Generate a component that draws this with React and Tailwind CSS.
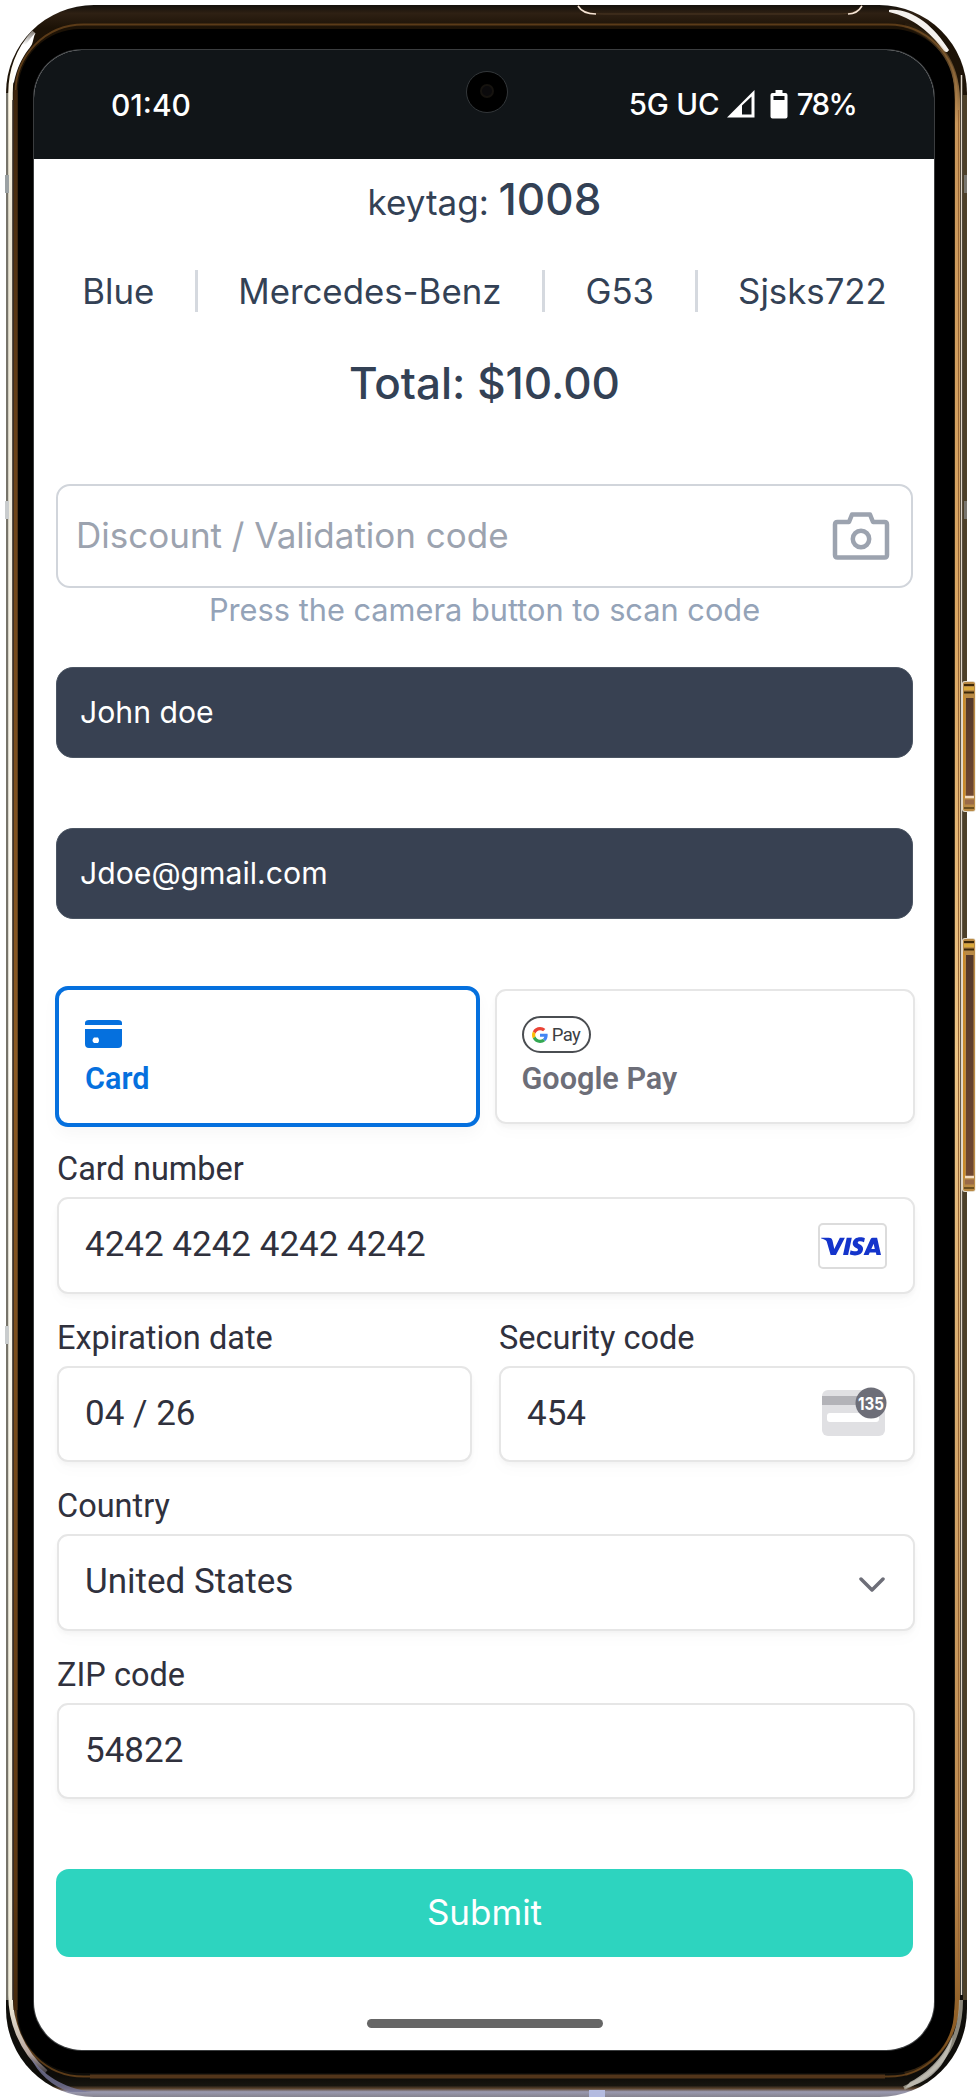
import React from "react";

const sans = "font-['Inter',sans-serif]";
const robo = "font-['Roboto',sans-serif]";

function SideButton({ y, h }) {
  return (
    <g transform={`translate(962 ${y})`}>
      <rect x="0" y="0" width="13.500" height={h} rx="3" fill="#e6dccb" />
      <rect x="1" y="1" width="12" height={h - 2} rx="2" fill="#b98a45" />
      <rect x="1" y="14" width="2" height={h - 28} fill="#c98a2a" />
      <rect x="4" y="17" width="7.500" height={h - 33} fill="url(#btn)" />
      <path d="M2 4H12M2 11.500H12" stroke="#3c2708" strokeWidth="2" />
      <path d="M2 7.500H12" stroke="#d9a93a" strokeWidth="3" />
      <path d={`M3 ${h - 15}H12`} stroke="#f3dcc0" strokeWidth="2.500" />
      <path d={`M3 ${h - 10}H12`} stroke="#9a6a48" strokeWidth="5" />
      <path d={`M2 ${h - 4}H12`} stroke="#6b4f20" strokeWidth="2" />
    </g>
  );
}

function PhoneFrame() {
  return (
    <svg className="absolute inset-0 pointer-events-none" width="978" height="2100" viewBox="0 0 978 2100" fill="none" aria-hidden="true">
      <defs>
        <linearGradient id="base" x1="0" y1="5" x2="0" y2="2097" gradientUnits="userSpaceOnUse">
          <stop offset="0" stopColor="#14100b" />
          <stop offset="0.004" stopColor="#2e2013" />
          <stop offset="0.011" stopColor="#1c1206" />
          <stop offset="0.5" stopColor="#3c2f1e" />
          <stop offset="0.99" stopColor="#0d0c09" />
          <stop offset="0.9945" stopColor="#17150f" />
          <stop offset="0.996" stopColor="#5d4630" />
          <stop offset="0.9975" stopColor="#9a99b0" />
          <stop offset="1" stopColor="#86838f" />
        </linearGradient>
        <linearGradient id="btn" x1="0" y1="0" x2="0" y2="1">
          <stop offset="0" stopColor="#53382a" />
          <stop offset="1" stopColor="#6f4731" />
        </linearGradient>
        <linearGradient id="fadeWhite" x1="0" y1="20" x2="0" y2="2085" gradientUnits="userSpaceOnUse">
          <stop offset="0" stopColor="#fff" stopOpacity="0" />
          <stop offset="0.012" stopColor="#fff" />
          <stop offset="0.04" stopColor="#fff8e6" />
          <stop offset="0.1" stopColor="#e8e3d2" />
          <stop offset="0.5" stopColor="#fdfbf3" />
          <stop offset="0.96" stopColor="#eeead8" />
          <stop offset="0.985" stopColor="#b8a69e" />
          <stop offset="1" stopColor="#8583a0" stopOpacity="0" />
        </linearGradient>
        <linearGradient id="fadeGold" x1="0" y1="20" x2="0" y2="2085" gradientUnits="userSpaceOnUse">
          <stop offset="0" stopColor="#b58b52" stopOpacity="0" />
          <stop offset="0.05" stopColor="#c8965a" />
          <stop offset="0.3" stopColor="#dba863" />
          <stop offset="0.5" stopColor="#edc585" />
          <stop offset="0.9" stopColor="#b9874d" />
          <stop offset="0.975" stopColor="#8a5a22" />
          <stop offset="1" stopColor="#8a5a22" stopOpacity="0" />
        </linearGradient>
        <linearGradient id="fadeBrown" x1="0" y1="60" x2="0" y2="2060" gradientUnits="userSpaceOnUse">
          <stop offset="0" stopColor="#3a220a" />
          <stop offset="0.2" stopColor="#6b4218" />
          <stop offset="0.5" stopColor="#8c5a22" />
          <stop offset="0.92" stopColor="#5b3610" />
          <stop offset="1" stopColor="#3a220a" />
        </linearGradient>
      </defs>
      <rect x="6" y="5" width="961" height="2092" rx="88" fill="url(#base)" />
      <rect x="15.500" y="24.500" width="941" height="2052" rx="68" stroke="#5b3b18" strokeWidth="2" />
      <path d="M90 2076.500H885" stroke="#52351a" strokeWidth="4" />
      <path d="M7.500 2000V93" stroke="#77746a" strokeWidth="3" />
      <path d="M46 2072C20 2050 10.500 2020 10.500 1995V93C10.500 70 18 50 34 32" stroke="url(#fadeWhite)" strokeWidth="4.500" />
      <path d="M30 2056C42 2074 62 2088 92 2092H70C52 2086 38 2074 30 2056Z" fill="#77779a" opacity="0.8" />
      <path d="M12 84C14 64 22 47 35 33C32 44 33 44 28 50C22 58 17 68 14 82Z" fill="#fff" />
      <path d="M15.500 2010V90" stroke="url(#fadeBrown)" strokeWidth="4" />
      <path d="M13 2000V100" stroke="#3a3028" strokeWidth="1.500" />
      <path d="M889 10C912 8 934 26 949 50C948 52 946 53 944 51C930 32 914 18 889 12Z" fill="#f4f1ee" />
      <path d="M905 25C937 35 957 62 957.500 100V2000C957 2032 940 2060 905 2074" stroke="url(#fadeGold)" strokeWidth="5" />
      <path d="M958.500 1980V110" stroke="#9a6634" strokeWidth="1" />
      <path d="M961.500 1995V75" stroke="#ded5c8" strokeWidth="1.500" />
      <path d="M965 2000V95" stroke="#4d4029" strokeWidth="4" />
      <path d="M961 2000C961 2044 938 2074 904 2088" stroke="#b5b1a3" strokeWidth="4" opacity="0.75" />
      <path d="M910 2082C934 2070 948 2048 953 2034C950 2062 932 2082 905 2088Z" fill="#c9c7bd" opacity="0.8" />
      <path d="M578 5C582 12 590 14 604 14H838C850 14 858 12 862 5" stroke="#4a3622" strokeWidth="1" />
      <path d="M578 6C581 11 587 14 596 14M862 6C859 11 854 14 848 14" stroke="#f6e4d4" strokeWidth="1.600" />
      <rect x="589" y="2090" width="16" height="7" fill="#b4bbe0" />
      <rect x="18" y="29" width="936" height="2044" rx="62" fill="#000" />
      <rect x="5" y="175" width="4" height="18" fill="#9ba1a3" />
      <rect x="5" y="501" width="4" height="18" fill="#c9cccd" />
      <rect x="5" y="1326" width="4" height="18" fill="#c9cccd" />
      <rect x="964" y="175" width="3" height="18" fill="#77746d" />
      <rect x="964" y="501" width="3" height="18" fill="#77746d" />
      <SideButton y={681} h={131} />
      <SideButton y={938} h={254} />
    </svg>
  );
}

function StatusBar() {
  return (
    <header className="relative flex h-[109px] shrink-0 items-center justify-between bg-[#111518] pl-[77px] pr-[78px] text-white font-['Inter',sans-serif]">
      <span className="mt-px text-[30px] font-medium">01:40</span>
      <div className="absolute left-[432px] top-[21px] size-[42px] rounded-full border border-[#33373a] bg-black">
        <div className="absolute left-[13px] top-[12px] size-[14px] rounded-full border-2 border-[#16130f] bg-[#0b0a0c]" />
      </div>
      <div className="flex items-center text-[29.500px] tracking-[-0.2px]">
        <span className="w-[98px] whitespace-nowrap font-medium">5G UC</span>
        <svg className="-mt-px" width="28" height="28" viewBox="0 0 28 28">
          <path d="M0 27.500L27.500 0V27.500Z" fill="#fff" />
          <path d="M15 15.500L24.500 6.500V24.500H15Z" fill="#111518" />
        </svg>
        <svg className="ml-[15px] -mt-px" width="18" height="29" viewBox="0 0 18 29">
          <path d="M5.500 0H12.500V3H15.500Q17.500 3 17.500 5V26.500Q17.500 28.500 15.500 28.500H2.500Q.5 28.500 .5 26.500V5Q.5 3 2.500 3H5.500Z" fill="#fff" />
          <rect x="3.500" y="6" width="11" height="4" fill="#111518" />
        </svg>
        <span className="ml-[9px] whitespace-nowrap font-medium tracking-[-1.700px]">78%</span>
      </div>
    </header>
  );
}

function GooglePayMark() {
  return (
    <div className="flex h-[37px] w-[69px] items-center justify-center gap-[4px] rounded-full border-2 border-[#4a4d51] bg-white">
      <svg width="16" height="16" viewBox="0 0 48 48">
        <path fill="#EA4335" d="M24 9.500c3.540 0 6.710 1.220 9.210 3.600l6.850-6.850C35.900 2.380 30.470 0 24 0 14.620 0 6.510 5.380 2.560 13.220l7.980 6.190C12.430 13.720 17.740 9.500 24 9.500z" />
        <path fill="#4285F4" d="M46.980 24.550c0-1.570-.15-3.090-.38-4.550H24v9.020h12.940c-.58 2.960-2.260 5.480-4.780 7.180l7.730 6c4.510-4.180 7.090-10.360 7.090-17.650z" />
        <path fill="#FBBC05" d="M10.530 28.590c-.48-1.450-.76-2.990-.76-4.590s.27-3.140.76-4.590l-7.980-6.190C.92 16.460 0 20.120 0 24c0 3.880.92 7.540 2.560 10.780l7.970-6.190z" />
        <path fill="#34A853" d="M24 48c6.480 0 11.930-2.130 15.890-5.810l-7.730-6c-2.150 1.450-4.920 2.300-8.160 2.300-6.260 0-11.570-4.220-13.470-9.910l-7.980 6.190C6.510 42.620 14.620 48 24 48z" />
      </svg>
      <span className="mt-px text-[18.500px] leading-none tracking-[-0.6px] text-[#3c4043]">Pay</span>
    </div>
  );
}

function Field({ label, children, className = "" }) {
  return (
    <div className={className}>
      <div className="mb-[9px] h-[38px] text-[32.500px] leading-[38px] text-[#30313d]">{label}</div>
      <div className="flex h-[96.700px] items-center justify-between rounded-[11px] border-2 border-[#e6e6e6] bg-white pl-[26px] pr-[26px] text-[35px] text-[#30313d] shadow-[0_3px_4px_rgba(0,0,0,0.03),0_8px_16px_rgba(0,0,0,0.02)]">
        {children}
      </div>
    </div>
  );
}

function VisaBadge() {
  return (
    <svg className="mt-px" width="69" height="46" viewBox="0 0 69 46">
      <rect x="1" y="1" width="67" height="44" rx="4" fill="#fff" stroke="#dcdcdc" strokeWidth="2" />
      <g transform="translate(3.200 14) scale(2.300 2.330)" fill="#1434cb">
        <path d="M0 .3H3.300C4.100.3 4.700.6 4.900 1.500L5.700 5.200 8.100.3H10.300L6.400 7.700H4.100L2.400 1.900C2.200 1.300 1.100.9 0 .6Z" />
        <path d="M11.100.3H13.300L11.700 7.700H9.500Z" />
        <path d="M19 .5L18.600 2.200C17.500 1.700 15.900 1.700 15.900 2.400C15.900 3.200 18.300 3.300 18.200 5.200C18.100 7.200 16.400 7.900 14.700 7.900C13.800 7.900 12.900 7.700 12.400 7.400L12.800 5.700C13.800 6.200 15.900 6.500 16 5.500C16 4.600 13.600 4.600 13.700 2.700C13.800 1 15.200.1 17 .1C17.800.1 18.500.3 19 .5Z" />
        <path fillRule="evenodd" d="M22.400.3H24.300L26 7.700H24L23.800 6.700H21.100L20.600 7.700H18.400L21.500.9Q21.800.3 22.400.3ZM22.800 2.900L21.800 5.200H23.300Z" />
      </g>
    </svg>
  );
}

function CvcIcon() {
  return (
    <svg className="-mt-[3px]" width="67" height="50" viewBox="0 0 67 50">
      <rect x="2" y="3" width="63" height="46" rx="6" fill="#e0e0e3" />
      <rect x="2" y="9" width="63" height="9" fill="#b3b3b8" />
      <rect x="7" y="26" width="52" height="9" rx="3" fill="#fff" />
      <circle cx="51" cy="16" r="15.500" fill="#6d6e78" />
      <text x="51" y="22.500" textAnchor="middle" fontSize="18" fontWeight="700" fontFamily="Inter, sans-serif" textLength="26" lengthAdjust="spacingAndGlyphs" fill="#fff">135</text>
    </svg>
  );
}

function DarkInput({ children }) {
  return (
    <div className="flex h-[91px] items-center rounded-[17px] border border-[#4b5563] bg-[#384152] pl-[23px] pt-px text-[30.200px] text-white">
      {children}
    </div>
  );
}

const vehicle = ["Blue", "Mercedes-Benz", "G53", "Sjsks722"];

export default function App() {
  return (
    <div className="relative h-[2100px] w-[978px] overflow-hidden bg-white pl-[34px] pt-[50px]">
      <PhoneFrame />
      <main className={`relative flex h-[2000px] w-[900px] flex-col overflow-hidden rounded-[48px] bg-white shadow-[0_0_0_1px_#3b3d3f] ${sans}`}>
        <StatusBar />
        <div className="flex flex-col pl-[22px] pr-[21px]">
          <h1 className="mt-[14px] h-[52px] whitespace-nowrap text-center text-[35px] leading-[52px] text-[#334155]">
            keytag: <span className="text-[44px] font-medium">1008</span>
          </h1>
          <div className="mt-[45px] flex h-[42px] items-center justify-center text-[34.800px] text-[#334155]">
            {vehicle.map((v, i) => (
              <span key={v} className={i ? "flex h-[42px] items-center whitespace-nowrap border-l-[3px] border-[#d5d9df] pl-[40px] ml-[41px]" : "flex h-[42px] items-center"}>{v}</span>
            ))}
          </div>
          <div className="mt-[38.500px] h-[64px] text-center text-[44px] font-medium leading-[64px] text-[#334155]">Total: $10.00</div>
          <div className="mt-[69.500px] flex h-[104px] items-center justify-between rounded-[14px] border-2 border-[#d1d5db] pb-[2px] pl-[18px] pr-[21px] text-[35px] text-[#9ca3af]">
            <span>Discount / Validation code</span>
            <svg className="mt-[2px]" width="58" height="48" viewBox="0 0 58 48" fill="none" stroke="#9ca3af" strokeWidth="4.500" strokeLinejoin="round">
              <path d="M5.500 10H17L20 2.500H38L41 10H52.500Q55 10 55 12.500V43Q55 45.500 52.500 45.500H5.500Q3 45.500 3 43V12.500Q3 10 5.500 10Z" />
              <circle cx="29" cy="27" r="8.200" />
            </svg>
          </div>
          <div className="h-[44px] text-center text-[30.750px] leading-[43px] text-[#94a3b8]">Press the camera button to scan code</div>
          <div className="mt-[34.500px] flex flex-col gap-[70px]">
            <DarkInput>John doe</DarkInput>
            <DarkInput>Jdoe@gmail.com</DarkInput>
          </div>
          <div className={`-ml-px mt-[67.500px] flex justify-between ${robo}`}>
            <div className="flex h-[140.500px] w-[424.500px] flex-col rounded-[13px] border-4 border-[#0570de] pl-[26px] pt-[28px] shadow-[0_8px_16px_rgba(0,0,0,0.03)]">
              <svg width="38" height="32" viewBox="0 0 38 32" fill="#0570de">
                <path d="M0 7V5Q0 2 4 2H33Q37 2 37 5V7Z" />
                <path fillRule="evenodd" d="M0 11H37V26Q37 30 33 30H4Q0 30 0 26ZM9 19.500H13Q15 22.500 13 25H9Q6 22.500 9 19.500Z" />
              </svg>
              <span className="mt-[10px] text-[30.600px] font-semibold leading-[38px] text-[#0570de]">Card</span>
            </div>
            <div className="mt-[3px] -mr-[2px] flex h-[135px] w-[420.500px] flex-col rounded-[11px] border-2 border-[#e6e6e6] pl-[25px] pt-[25px] shadow-[0_3px_4px_rgba(0,0,0,0.03),0_8px_16px_rgba(0,0,0,0.02)]">
              <GooglePayMark />
              <span className="mt-[7px] text-[30.600px] font-semibold leading-[38px] text-[#6d6e78]">Google Pay</span>
            </div>
          </div>
          <div className={`-mr-[2px] ml-[1px] mt-[23.500px] flex flex-col gap-[24.900px] ${robo}`}>
            <Field label="Card number"><span>4242 4242 4242 4242</span><VisaBadge /></Field>
            <div className="flex justify-between">
              <Field label="Expiration date" className="w-[415px]"><span>04 / 26</span></Field>
              <Field label="Security code" className="w-[416px]"><span>454</span><CvcIcon /></Field>
            </div>
            <Field label="Country">
              <span>United States</span>
              <svg className="mr-[2px] mt-[4px]" width="26" height="16" viewBox="0 0 26 16" fill="none" stroke="#6d6e78" strokeWidth="3.500" strokeLinecap="round" strokeLinejoin="round"><path d="M2 2L13 13L24 2" /></svg>
            </Field>
            <Field label="ZIP code"><span>54822</span></Field>
          </div>
          <button className="mt-[69.500px] h-[88px] rounded-[13px] bg-[#2dd4bf] pb-[2px] text-[35px] text-white">Submit</button>
          <div className="mt-[62px] h-[9px] w-[236px] self-center rounded-full bg-[#666]" />
        </div>
      </main>
    </div>
  );
}
